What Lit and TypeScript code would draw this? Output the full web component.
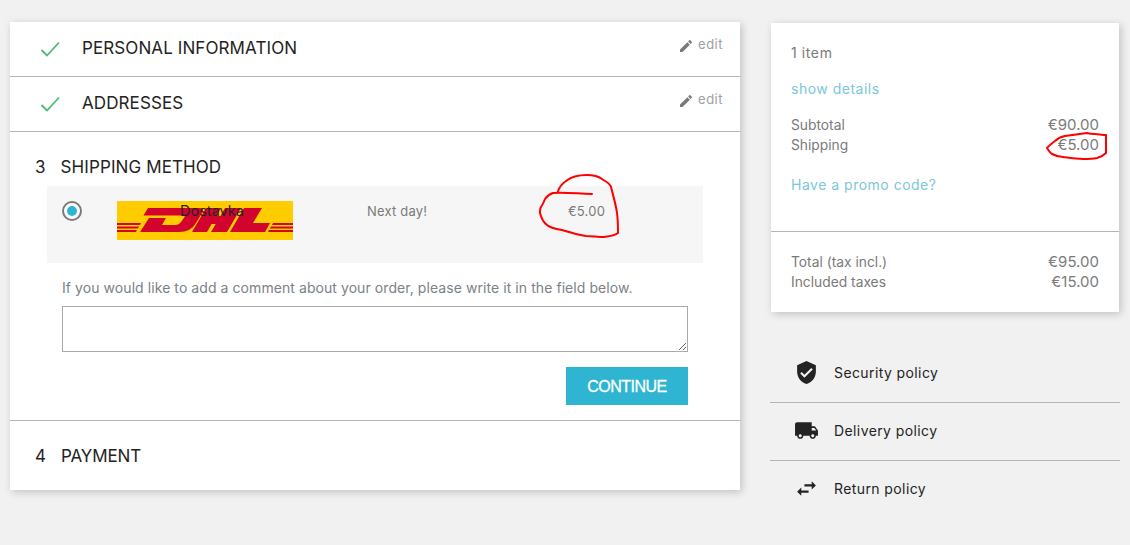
import { LitElement, css, html, svg } from 'lit';
import { customElement } from 'lit/decorators.js';

const EDIT = 'M3 17.25V21h3.75L17.81 9.94l-3.75-3.75L3 17.25zM20.71 7.04c.39-.39.39-1.02 0-1.41l-2.34-2.34c-.39-.39-1.02-.39-1.41 0l-1.83 1.83 3.75 3.75 1.83-1.83z';
const SHIELD = 'M12 1L3 5v6c0 5.55 3.84 10.74 9 12 5.16-1.26 9-6.45 9-12V5l-9-4zm-2 16l-4-4 1.41-1.41L10 14.17l6.59-6.59L18 9l-8 8z';
const TRUCK = 'M20 8h-3V4H3c-1.1 0-2 .9-2 2v11h2c0 1.66 1.34 3 3 3s3-1.34 3-3h6c0 1.66 1.34 3 3 3s3-1.34 3-3h2v-5l-3-4zM6 18.5c-.83 0-1.5-.67-1.5-1.5s.67-1.5 1.5-1.5 1.5.67 1.5 1.5-.67 1.5-1.5 1.5zm13.5-9l1.96 2.5H17V9.5h2.5zm-1.5 9c-.83 0-1.5-.67-1.5-1.5s.67-1.5 1.5-1.5 1.5.67 1.5 1.5-.67 1.5-1.5 1.5z';
const SWAP = 'M6.99 11L3 15l3.99 4v-3H14v-2H6.99v-3zM21 9l-3.99-4v3H10v2h7.01v3L21 9z';

const POLICIES = [
  { icon: SHIELD, label: 'Security policy' },
  { icon: TRUCK, label: 'Delivery policy' },
  { icon: SWAP, label: 'Return policy' },
];

@customElement('app-root')
export class AppRoot extends LitElement {
  static styles = css`
    :host {
      display: block;
      position: relative;
      height: 545px;
      overflow: hidden;
      background: #f1f1f1;
      font-family: 'Inter', 'Liberation Sans', sans-serif;
      color: #232323;
    }

    .page {
      display: flex;
      align-items: flex-start;
      gap: 30px;
      padding: 22px 0 0 10px;
    }

    .steps {
      width: 730px;
      background: #fff;
      box-shadow: 2px 2px 8px 0 rgba(0, 0, 0, 0.2);
    }

    .done {
      display: flex;
      height: 55px;
      box-sizing: border-box;
      border-bottom: 1px solid #b5b5b5;
    }

    .check { margin: 18px 0 0 30px; width: 21px; height: 18px; flex: none; }

    .title {
      font-size: 17px;
      line-height: 20px;
      letter-spacing: 0.1px;
      color: #232323;
    }

    .done .title { margin: 16px 0 0 21px; flex: 1; }

    .edit {
      display: flex;
      align-items: center;
      gap: 4px;
      height: 16px;
      margin: 14px 17px 0 0;
      font-size: 13px;
      letter-spacing: 0.5px;
      color: #a0a0a0;
    }

    .edit svg { width: 16px; height: 16px; margin-top: 4px; fill: #7a7a7a; }

    .current {
      padding: 25px 0 15px;
      border-bottom: 1px solid #b5b5b5;
    }

    .step-head {
      display: flex;
      gap: 15px;
      padding-left: 25px;
    }

    .option {
      display: flex;
      height: 77px;
      margin: 9px 37px 0 37px;
      background: #f6f6f6;
      font-size: 13px;
      letter-spacing: 0.2px;
      color: #7a7a7a;
    }

    .radio {
      width: 20px;
      height: 20px;
      box-sizing: border-box;
      margin: 15px 0 0 15px;
      padding: 3px;
      border: 2px solid #7a7a7a;
      border-radius: 50%;
      background: #fff;
      flex: none;
    }

    .radio span {
      display: block;
      width: 100%;
      height: 100%;
      border-radius: 50%;
      background: #2fb5d2;
    }

    .carrier {
      position: relative;
      width: 176px;
      height: 39px;
      margin: 15px 0 0 35px;
      flex: none;
    }

    .carrier svg { display: block; }

    .carrier span {
      position: absolute;
      left: 63px;
      top: 2px;
      font-size: 14.5px;
      line-height: 16px;
      letter-spacing: 0;
      color: #232323;
    }

    .delay { width: 201px; margin: 17px 0 0 74px; line-height: 16px; flex: none; }

    .price { margin-top: 17px; line-height: 16px; }

    .comment {
      margin: 17px 52px 0;
      font-size: 14px;
      letter-spacing: 0.07px;
      line-height: 16px;
      color: #7a8288;
    }

    textarea {
      display: block;
      box-sizing: border-box;
      width: 626px;
      height: 46px;
      margin: 10px 0 0 52px;
      border: 1px solid #a9a9a9;
      border-radius: 0;
      background: #fff;
      padding: 0;
    }

    .actions {
      display: flex;
      justify-content: flex-end;
      margin: 15px 52px 0;
    }

    button {
      width: 122px;
      height: 38px;
      border: 0;
      padding: 1px 0 0;
      background: #2fb5d2;
      color: #fff;
      font-family: 'Liberation Sans', sans-serif;
      font-size: 16px;
      letter-spacing: -0.5px;
      font-weight: 400;
      -webkit-text-stroke: 0.3px #fff;
    }

    .last { height: 69px; padding-top: 25px; box-sizing: border-box; }

    .last .step-head { gap: 15px; letter-spacing: -0.1px; }

    .aside { width: 350px; }

    .summary {
      width: 348px;
      margin: 1px 0 0 1px;
      height: 289px;
      background: #fff;
      box-shadow: 2px 2px 8px 0 rgba(0, 0, 0, 0.2);
      font-size: 13.8px;
      color: #7a7a7a;
    }

    .summary-top {
      height: 209px;
      box-sizing: border-box;
      padding: 21px 20px 0;
      border-bottom: 1px solid #b5b5b5;
    }

    .items { font-size: 14px; line-height: 18px; letter-spacing: 0.6px; }

    .link {
      font-size: 14px;
      line-height: 18px;
      letter-spacing: 0.5px;
      color: #7cc6da;
    }

    .details { margin-top: 18px; }

    .line {
      display: flex;
      justify-content: space-between;
      line-height: 20px;
    }

    .line b { font-weight: 400; font-size: 15px; }

    .lines { margin-top: 17px; }

    .promo { margin-top: 21px; }

    .summary-bottom { padding: 20px 20px 0; }

    .policies { margin-top: 33px; }

    .policy {
      display: flex;
      align-items: center;
      gap: 15px;
      height: 58px;
      box-sizing: border-box;
      padding: 0 0 2px 24px;
      border-bottom: 1px solid #b5b5b5;
      font-size: 14px;
      letter-spacing: 0.4px;
      color: #232323;
    }

    .policy:last-child { border-bottom: 0; padding-bottom: 3px; }

    .policy svg { width: 25px; height: 25px; fill: #232323; flex: none; }

    .marks {
      position: absolute;
      left: 0;
      top: 0;
      pointer-events: none;
    }
  `;

  private check() {
    return html`<svg class="check" viewBox="0 0 21 18"><polyline points="1.500,10 7,15.500 19,2.500" fill="none" stroke="#4cbb6c" stroke-width="1.800"/></svg>`;
  }

  private edit() {
    return html`<div class="edit"><svg viewBox="0 0 24 24"><path d=${EDIT}/></svg>edit</div>`;
  }

  private logo() {
    return html`<svg width="176" height="39" viewBox="0 0 176 39">
      <rect width="176" height="39" fill="#ffcc00"/>
      <g fill="#d2042d">
        <path d="M31 7H82Q88 7 85 12L79 22Q74 31 62 31H23L32 17H49L45 24H58Q62 24 64 21L67.500 16Q68.500 14.500 66 14.500H26.500Z"/>
        <path d="M89 7H104L99.400 15H103.400L108 7H124L110 31H94L98.700 23H94.700L90 31H75Z"/>
        <path d="M127 7H145L136 22H153L148 31H113Z"/>
        <path d="M0 22H24L23 24H0ZM0 25.500H22L21 27.500H0ZM0 29H20L19 31H0Z"/>
        <path d="M156 22H176V24H155ZM154 25.500H176V27.500H153ZM152 29H176V31H151Z"/>
      </g>
    </svg>`;
  }

  private marks() {
    return svg`<svg class="marks" width="1130" height="545" viewBox="0 0 1130 545" fill="none" stroke="#f00" stroke-width="2" stroke-linejoin="round" stroke-linecap="round">
      <path d="M558 191C560 186 563 183 566 181C572 176 580 175 587 175C593 175 598 176 602 179C606 182 610 183 611 187C613 195 616 205 617 213C618 220 618 228 618 233C614 236 610 236 604 237C598 237 592 236 586 236C578 235 570 232 562 230C556 229 550 228 547 225C543 222 541 217 540 213C540 210 540 208 541 207C543 204 544 202 545 199C547 196 550 194 553 193C560 192 570 193 592 194"/>
      <path d="M1087 133C1080 134 1072 135 1065 136C1060 137 1057 139 1055 141C1052 143 1049 146 1047 148C1049 151 1050 153 1052 154C1056 156 1060 157 1063 157C1070 158 1076 159 1083 159C1088 159 1092 159 1097 158C1101 157 1104 155 1106 153C1106 147 1106 141 1106 135C1102 135 1098 134 1095 134C1092 134 1090 134 1087 133"/>
    </svg>`;
  }

  render() {
    return html`
      <div class="page">
        <div class="steps">
          <div class="done">
            ${this.check()}
            <div class="title">PERSONAL INFORMATION</div>
            ${this.edit()}
          </div>
          <div class="done">
            ${this.check()}
            <div class="title">ADDRESSES</div>
            ${this.edit()}
          </div>
          <div class="current">
            <div class="step-head title"><span>3</span><span>SHIPPING METHOD</span></div>
            <div class="option">
              <div class="radio"><span></span></div>
              <div class="carrier">${this.logo()}<span>Dostavka</span></div>
              <div class="delay">Next day!</div>
              <div class="price">€5.00</div>
            </div>
            <div class="comment">If you would like to add a comment about your order, please write it in the field below.</div>
            <textarea></textarea>
            <div class="actions"><button>CONTINUE</button></div>
          </div>
          <div class="last">
            <div class="step-head title"><span>4</span><span>PAYMENT</span></div>
          </div>
        </div>
        <div class="aside">
          <div class="summary">
            <div class="summary-top">
              <div class="items">1 item</div>
              <div class="link details">show details</div>
              <div class="lines">
                <div class="line"><span>Subtotal</span><b>€90.00</b></div>
                <div class="line"><span>Shipping</span><b>€5.00</b></div>
              </div>
              <div class="link promo">Have a promo code?</div>
            </div>
            <div class="summary-bottom">
              <div class="line"><span>Total (tax incl.)</span><b>€95.00</b></div>
              <div class="line"><span>Included taxes</span><b>€15.00</b></div>
            </div>
          </div>
          <div class="policies">
            ${POLICIES.map(
              (p) => html`<div class="policy"><svg viewBox="0 0 24 24"><path d=${p.icon}/></svg>${p.label}</div>`,
            )}
          </div>
        </div>
      </div>
      ${this.marks()}
    `;
  }
}
